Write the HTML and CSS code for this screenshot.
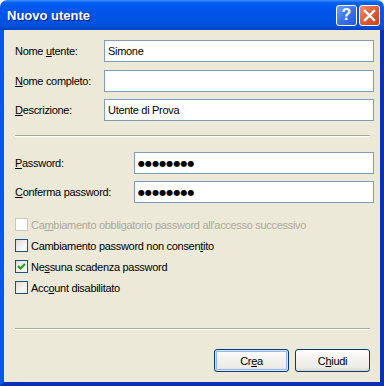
FILE: index.html
```html
<!DOCTYPE html>
<html lang="it">
<head>
    <meta charset="UTF-8">
    <title>Nuovo utente</title>
    <link rel="stylesheet" href="styles.css">
</head>
<body>
    <div class="window">
        <div class="titlebar">
            <span class="title">Nuovo utente</span>
            <div class="title-buttons">
                <span class="tb-btn help">?</span>
                <span class="tb-btn close">
                    <svg width="13" height="13" viewBox="0 0 13 13">
                        <path d="M2 2 L11 11 M11 2 L2 11" stroke="#fff" stroke-width="2.4" stroke-linecap="square"/>
                    </svg>
                </span>
            </div>
        </div>
        <div class="client">
            <div class="fields">
                <label>Nome <u>u</u>tente:</label>
                <div class="textbox">Simone</div>
                <label><u>N</u>ome completo:</label>
                <div class="textbox"></div>
                <label><u>D</u>escrizione:</label>
                <div class="textbox">Utente di Prova</div>
            </div>

            <div class="sep"></div>

            <div class="fields pw">
                <label><u>P</u>assword:</label>
                <div class="textbox dots">●●●●●●●●</div>
                <label><u>C</u>onferma password:</label>
                <div class="textbox dots">●●●●●●●●</div>
            </div>

            <div class="checks">
                <div class="check disabled">
                    <span class="box"></span>
                    <span>Ca<u>m</u>biamento obbligatorio password all'accesso successivo</span>
                </div>
                <div class="check">
                    <span class="box"></span>
                    <span>Cambiamento password non consen<u>t</u>ito</span>
                </div>
                <div class="check">
                    <span class="box">
                        <svg width="11" height="11" viewBox="0 0 11 11">
                            <path d="M2 5 L4.5 7.5 L9 3" fill="none" stroke="#21A121" stroke-width="2.2"/>
                        </svg>
                    </span>
                    <span>Ne<u>s</u>suna scadenza password</span>
                </div>
                <div class="check">
                    <span class="box"></span>
                    <span>Acc<u>o</u>unt disabilitato</span>
                </div>
            </div>

            <div class="sep bottom"></div>

            <div class="buttons">
                <span class="btn default">Cr<u>e</u>a</span>
                <span class="btn">C<u>h</u>iudi</span>
            </div>
        </div>
    </div>
</body>
</html>
```

FILE: styles.css
```css
/* Reset */
* {
    margin: 0;
    padding: 0;
    box-sizing: border-box;
}

body {
    background: #fff;
    font-family: 'Liberation Sans', Arial, sans-serif;
    font-size: 11px;
    letter-spacing: -0.3px;
    color: #000;
}

/* Window frame */
.window {
    width: 384px;
    height: 386px;
    display: flex;
    flex-direction: column;
}

.titlebar {
    height: 30px;
    display: flex;
    align-items: center;
    justify-content: space-between;
    padding: 0 4px 0 7px;
    border-radius: 7px 7px 0 0;
    background: linear-gradient(to bottom, #3D95FF 0%, #0A62F2 8%, #0058EE 20%, #0054E6 60%, #0050DC 85%, #0042C4 100%);
}

.title {
    color: #fff;
    font-weight: bold;
    font-size: 13px;
    letter-spacing: 0;
    text-shadow: 1px 1px 0 #0A1E6E;
}

.title-buttons {
    display: flex;
    gap: 2px;
}

.tb-btn {
    width: 21px;
    height: 21px;
    border: 1px solid #fff;
    border-radius: 3px;
    display: flex;
    align-items: center;
    justify-content: center;
    color: #fff;
}

.tb-btn.help {
    background: linear-gradient(135deg, #6FA2FA 0%, #3A74EC 50%, #2258D8 100%);
    font-weight: bold;
    font-size: 16px;
    letter-spacing: 0;
}

.tb-btn.close {
    background: linear-gradient(135deg, #EE9070 0%, #E0603C 45%, #C8401C 100%);
}

/* Client area */
.client {
    flex: 1;
    background: #ECE9D8;
    border-left: 4px solid #0758E6;
    border-right: 4px solid #0A2FB8;
    border-bottom: 4px solid #0A2FB8;
    padding: 10px 6px 0 11px;
    display: flex;
    flex-direction: column;
}

.fields {
    display: grid;
    grid-template-columns: 89px 1fr;
    grid-auto-rows: 22px;
    row-gap: 7.5px;
    align-items: center;
}

.fields.pw {
    grid-template-columns: 119px 1fr;
    row-gap: 7px;
    margin-top: 15px;
}

.textbox {
    height: 22px;
    background: #fff;
    border: 1px solid #7F9DB9;
    padding: 0 3px;
    display: flex;
    align-items: center;
}

.textbox.dots {
    font-family: 'DejaVu Sans', sans-serif;
    font-size: 8px;
    letter-spacing: 0.1px;
}

/* Etched separator */
.sep {
    height: 2px;
    border-top: 1px solid #ACA899;
    border-bottom: 1px solid #fff;
    margin: 14px 4px 0 0;
}

.sep.bottom {
    margin-top: 30px;
}

/* Checkboxes */
.checks {
    margin-top: 11px;
    display: flex;
    flex-direction: column;
}

.check {
    height: 21px;
    display: flex;
    align-items: center;
    gap: 3px;
}

.check .box {
    width: 13px;
    height: 13px;
    border: 1px solid #1C5180;
    background: linear-gradient(135deg, #DCDCD7 0%, #F4F4F0 60%, #fff 100%);
    display: flex;
    align-items: center;
    justify-content: center;
}

.check.disabled {
    color: #ACA899;
}

.check.disabled .box {
    border-color: #CAC8BB;
    background: #fff;
}

/* Push buttons */
.buttons {
    display: flex;
    justify-content: flex-end;
    gap: 6px;
    margin: 19px 4px 0 0;
}

.btn {
    width: 75px;
    height: 23px;
    border: 1px solid #003C74;
    border-radius: 3px;
    background: linear-gradient(to bottom, #fff 0%, #F4F3EE 40%, #ECEBE6 85%, #D6D0C5 100%);
    display: flex;
    align-items: center;
    justify-content: center;
}

.btn.default {
    box-shadow: inset 0 0 0 1px #CEE7FF, inset 0 0 0 2px #98B8EA;
}
```
